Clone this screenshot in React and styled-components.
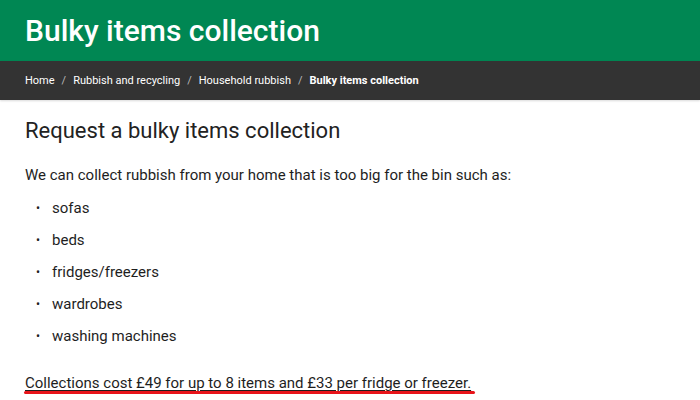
import React from "react";
import styled, { createGlobalStyle } from "styled-components";

const Global = createGlobalStyle`
  html, body { margin: 0; padding: 0; background: #fff; }
  body { font-family: Roboto, "Liberation Sans", sans-serif; color: #1e1e1e; }
`;

const Page = styled.div`
  width: 700px;
  height: 400px;
  overflow: hidden;
`;

const Banner = styled.header`
  background: #008753;
  height: 61px;
  display: flex;
  align-items: center;
  padding: 0 25px;
  box-sizing: border-box;
`;

const Title = styled.h1`
  margin: 0;
  font-size: 30px;
  font-weight: 500;
  color: #fff;
`;

const Crumbs = styled.nav`
  background: #333;
  height: 39px;
  display: flex;
  align-items: center;
  padding: 0 25px;
  box-sizing: border-box;
  box-shadow: 0 1px 2px rgba(0,0,0,0.15);
`;

const Crumb = styled.span`
  color: #fff;
  font-size: 11px;
  font-weight: ${(p) => (p.$current ? 700 : 400)};
`;

const Sep = styled.span`
  color: #bbb;
  font-size: 11px;
  margin: 0 7px;
`;

const Main = styled.main`
  padding: 18px 25px 0;
`;

const Heading = styled.h2`
  margin: 0 0 20px;
  font-size: 22px;
  line-height: 26px;
  font-weight: 400;
  color: #222;
`;

const Para = styled.p`
  margin: 0;
  font-size: 15px;
  line-height: 22px;
  color: #1e1e1e;
`;

const List = styled.ul`
  list-style: none;
  margin: 6px 0 0;
  padding: 0;
`;

const Item = styled.li`
  font-size: 15px;
  line-height: 32px;
  display: flex;
  align-items: center;
  &::before {
    content: "•";
    width: 27px;
    padding-left: 11px;
    box-sizing: border-box;
    font-size: 12px;
  }
`;

const Note = styled.p`
  position: relative;
  margin: 20px 0 0;
  display: inline-block;
  font-size: 15px;
  line-height: 22px;
  text-decoration: underline;
  text-underline-offset: 2px;
`;

const Marker = styled.span`
  position: absolute;
  left: -1px;
  right: -4px;
  bottom: 0;
  height: 3px;
  border-radius: 2px;
  background: #e8141a;
`;

const items = ["sofas", "beds", "fridges/freezers", "wardrobes", "washing machines"];

export default function App() {
  return (
    <Page>
      <Global />
      <Banner>
        <Title>Bulky items collection</Title>
      </Banner>
      <Crumbs>
        <Crumb>Home</Crumb>
        <Sep>/</Sep>
        <Crumb>Rubbish and recycling</Crumb>
        <Sep>/</Sep>
        <Crumb>Household rubbish</Crumb>
        <Sep>/</Sep>
        <Crumb $current>Bulky items collection</Crumb>
      </Crumbs>
      <Main>
        <Heading>Request a bulky items collection</Heading>
        <Para>We can collect rubbish from your home that is too big for the bin such as:</Para>
        <List>
          {items.map((t) => (
            <Item key={t}>{t}</Item>
          ))}
        </List>
        <Note>
          Collections cost £49 for up to 8 items and £33 per fridge or freezer.
          <Marker />
        </Note>
      </Main>
    </Page>
  );
}
